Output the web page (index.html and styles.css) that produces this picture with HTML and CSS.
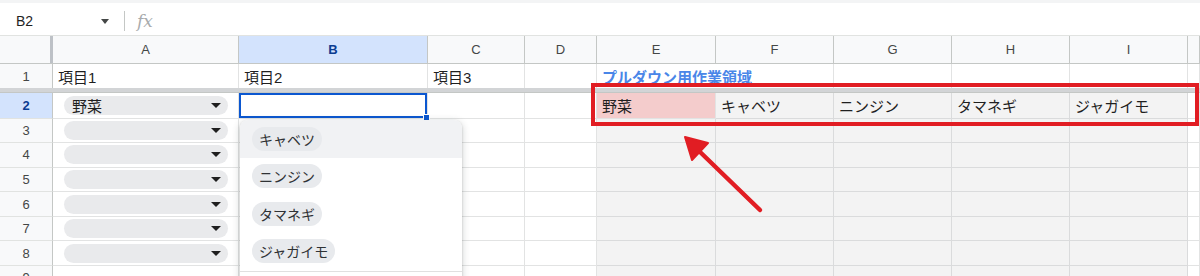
FILE: index.html
```html
<!DOCTYPE html>
<html lang="ja">
<head>
  <meta charset="UTF-8">
  <title>プルダウン</title>
  <link rel="stylesheet" href="styles.css">
</head>
<body>
  <div class="page">
    <div class="formula-bar">
      <div class="name-box"><span>B2</span><span class="caret"></span></div>
      <div class="divider"></div>
      <span class="fx">fx</span>
    </div>

    <div class="row col-head">
      <div class="corner"></div>
      <div>A</div>
      <div class="on">B</div>
      <div>C</div>
      <div>D</div>
      <div>E</div>
      <div>F</div>
      <div>G</div>
      <div>H</div>
      <div>I</div>
      <div></div>
    </div>

    <div class="row r1">
      <div class="rh">1</div>
      <div class="cell">項目1</div>
      <div class="cell">項目2</div>
      <div class="cell">項目3</div>
      <div class="cell"></div>
      <div class="cell title">プルダウン用作業領域</div>
      <div class="cell"></div>
      <div class="cell"></div>
      <div class="cell"></div>
      <div class="cell"></div>
      <div class="cell"></div>
    </div>

    <div class="freeze"></div>

    <div class="row r2">
      <div class="rh on">2</div>
      <div class="cell pick-cell"><div class="pick"><span>野菜</span><span class="tri"></span></div></div>
      <div class="cell sel"></div>
      <div class="cell"></div>
      <div class="cell"></div>
      <div class="cell key">野菜</div>
      <div class="cell work">キャベツ</div>
      <div class="cell work">ニンジン</div>
      <div class="cell work">タマネギ</div>
      <div class="cell work">ジャガイモ</div>
      <div class="cell"></div>
    </div>

    <div class="row">
      <div class="rh">3</div>
      <div class="cell pick-cell"><div class="pick"><span></span><span class="tri"></span></div></div>
      <div class="cell"></div><div class="cell"></div><div class="cell"></div>
      <div class="cell work"></div><div class="cell work"></div><div class="cell work"></div><div class="cell work"></div><div class="cell work"></div>
      <div class="cell"></div>
    </div>
    <div class="row">
      <div class="rh">4</div>
      <div class="cell pick-cell"><div class="pick"><span></span><span class="tri"></span></div></div>
      <div class="cell"></div><div class="cell"></div><div class="cell"></div>
      <div class="cell work"></div><div class="cell work"></div><div class="cell work"></div><div class="cell work"></div><div class="cell work"></div>
      <div class="cell"></div>
    </div>
    <div class="row">
      <div class="rh">5</div>
      <div class="cell pick-cell"><div class="pick"><span></span><span class="tri"></span></div></div>
      <div class="cell"></div><div class="cell"></div><div class="cell"></div>
      <div class="cell work"></div><div class="cell work"></div><div class="cell work"></div><div class="cell work"></div><div class="cell work"></div>
      <div class="cell"></div>
    </div>
    <div class="row">
      <div class="rh">6</div>
      <div class="cell pick-cell"><div class="pick"><span></span><span class="tri"></span></div></div>
      <div class="cell"></div><div class="cell"></div><div class="cell"></div>
      <div class="cell work"></div><div class="cell work"></div><div class="cell work"></div><div class="cell work"></div><div class="cell work"></div>
      <div class="cell"></div>
    </div>
    <div class="row">
      <div class="rh">7</div>
      <div class="cell pick-cell"><div class="pick"><span></span><span class="tri"></span></div></div>
      <div class="cell"></div><div class="cell"></div><div class="cell"></div>
      <div class="cell work"></div><div class="cell work"></div><div class="cell work"></div><div class="cell work"></div><div class="cell work"></div>
      <div class="cell"></div>
    </div>
    <div class="row">
      <div class="rh">8</div>
      <div class="cell pick-cell"><div class="pick"><span></span><span class="tri"></span></div></div>
      <div class="cell"></div><div class="cell"></div><div class="cell"></div>
      <div class="cell work"></div><div class="cell work"></div><div class="cell work"></div><div class="cell work"></div><div class="cell work"></div>
      <div class="cell"></div>
    </div>
    <div class="row">
      <div class="rh">9</div>
      <div class="cell"></div>
      <div class="cell"></div><div class="cell"></div><div class="cell"></div>
      <div class="cell work"></div><div class="cell work"></div><div class="cell work"></div><div class="cell work"></div><div class="cell work"></div>
      <div class="cell"></div>
    </div>

    <!-- dropdown opened from B2 -->
    <div class="menu">
      <div class="opt hover"><span class="chip">キャベツ</span></div>
      <div class="opt"><span class="chip">ニンジン</span></div>
      <div class="opt"><span class="chip">タマネギ</span></div>
      <div class="opt"><span class="chip">ジャガイモ</span></div>
      <div class="menu-sep"></div>
    </div>

    <!-- annotation -->
    <div class="callout"></div>
    <svg class="arrow" width="1200" height="276" viewBox="0 0 1200 276">
      <line x1="760" y1="210" x2="698" y2="150" stroke="#e11d23" stroke-width="4.5" stroke-linecap="round"/>
      <polygon points="685,137 708,143 692,160" fill="#e11d23" stroke="#e11d23" stroke-width="2" stroke-linejoin="round"/>
    </svg>
  </div>
</body>
</html>
```

FILE: styles.css
```css
body {
  margin: 0;
  font-family: "Liberation Sans", "Noto Sans CJK JP", sans-serif;
  color: #1f1f1f;
  background: #fff;
}
.page {
  position: relative;
  width: 1200px;
  height: 276px;
  overflow: hidden;
}

/* formula bar */
.formula-bar {
  height: 36px;
  display: flex;
  align-items: center;
  box-sizing: border-box;
  padding-top: 4px;
  border-top: 3px solid #f3f4f5;
  border-bottom: 1px solid #e1e3e1;
}
.name-box {
  width: 124px;
  display: flex;
  align-items: center;
  padding-left: 16px;
  box-sizing: border-box;
  font-size: 14px;
}
.name-box .caret {
  margin-left: auto;
  margin-right: 15px;
  border: solid transparent;
  border-width: 5px 4.5px 0;
  border-top-color: #444746;
}
.divider {
  width: 1px;
  height: 20px;
  background: #c4c7c5;
}
.fx {
  margin-left: 12px;
  font-family: "DejaVu Serif", serif;
  font-style: italic;
  font-size: 17px;
  color: #a8abad;
}

/* grid */
.row {
  display: grid;
  grid-template-columns: 53px 186px 189px 97px 72px 119px repeat(4, 118px) 1fr;
  height: 24.6px;
}
.row > div {
  box-sizing: border-box;
  min-width: 0;
}
.col-head {
  height: 28px;
  background: #f8f9fa;
  border-bottom: 1px solid #c4c7c5;
  box-sizing: border-box;
}
.col-head > div {
  display: flex;
  align-items: center;
  justify-content: center;
  border-right: 1px solid #c4c7c5;
  font-size: 13px;
  color: #444746;
}
.col-head .corner {
  border-right: 3px solid #bdc1c6;
}
.col-head .on {
  background: #d3e3fd;
  color: #0b3d91;
  font-weight: bold;
}

.rh {
  display: flex;
  align-items: center;
  justify-content: center;
  background: #f8f9fa;
  border-right: 1px solid #c4c7c5;
  border-bottom: 1px solid #e1e3e1;
  font-size: 13px;
  color: #444746;
}
.rh.on {
  background: #d3e3fd;
  color: #0b3d91;
  font-weight: bold;
}
.cell {
  display: flex;
  align-items: center;
  padding-left: 5px;
  border-right: 1px solid #e2e3e3;
  border-bottom: 1px solid #e2e3e3;
  font-size: 15px;
  white-space: nowrap;
}
.r1 {
  height: 24px;
}
.r1 > div {
  border-bottom: none;
}
.r1 .title {
  color: #4a86e8;
  font-weight: bold;
  border-right: none;
}
.freeze {
  height: 5px;
  background: #d2d4d6;
  border-bottom: 1px solid #c4c7c5;
  box-sizing: border-box;
}
.r2 {
  height: 25.5px;
}
.cell.key {
  background: #f4cccc;
}
.cell.work {
  background: #f3f3f3;
  border-color: #dadbdc;
}

/* in-cell dropdown chips */
.pick-cell {
  padding: 0 10px 0 11px;
}
.pick {
  flex: 1;
  height: 19px;
  border-radius: 10px;
  background: #e9eaec;
  display: flex;
  align-items: center;
  justify-content: space-between;
  padding: 0 7px 0 8px;
  font-size: 15px;
}
.tri {
  border: solid transparent;
  border-width: 5px 5px 0;
  border-top-color: #1f1f1f;
}

.sel {
  position: relative;
  box-shadow: inset 0 0 0 2px #0b57d0;
}
.sel::after {
  content: "";
  position: absolute;
  right: -3px;
  bottom: -3px;
  width: 5px;
  height: 5px;
  background: #0b57d0;
  border: 1px solid #fff;
}

/* opened dropdown */
.menu {
  position: absolute;
  left: 240px;
  top: 120px;
  width: 222px;
  height: 170px;
  background: #fff;
  border-radius: 8px;
  box-shadow: 0 1px 2px rgba(60, 64, 67, 0.3), 0 2px 6px 2px rgba(60, 64, 67, 0.15);
  overflow: hidden;
}
.opt {
  height: 37.5px;
  display: flex;
  align-items: center;
  padding-left: 12px;
}
.opt.hover {
  background: #f1f2f4;
}
.chip {
  display: inline-flex;
  align-items: center;
  height: 24px;
  padding: 0 7px;
  border-radius: 12px;
  background: #e8eaed;
  font-size: 14px;
  color: #2f3235;
}
.menu-sep {
  margin-top: 1px;
  border-top: 1px solid #e0e0e0;
}

/* red annotation */
.callout {
  position: absolute;
  left: 591px;
  top: 83px;
  width: 608px;
  height: 43px;
  border: 4px solid #e11d23;
  box-sizing: border-box;
}
.arrow {
  position: absolute;
  left: 0;
  top: 0;
  pointer-events: none;
}
```
